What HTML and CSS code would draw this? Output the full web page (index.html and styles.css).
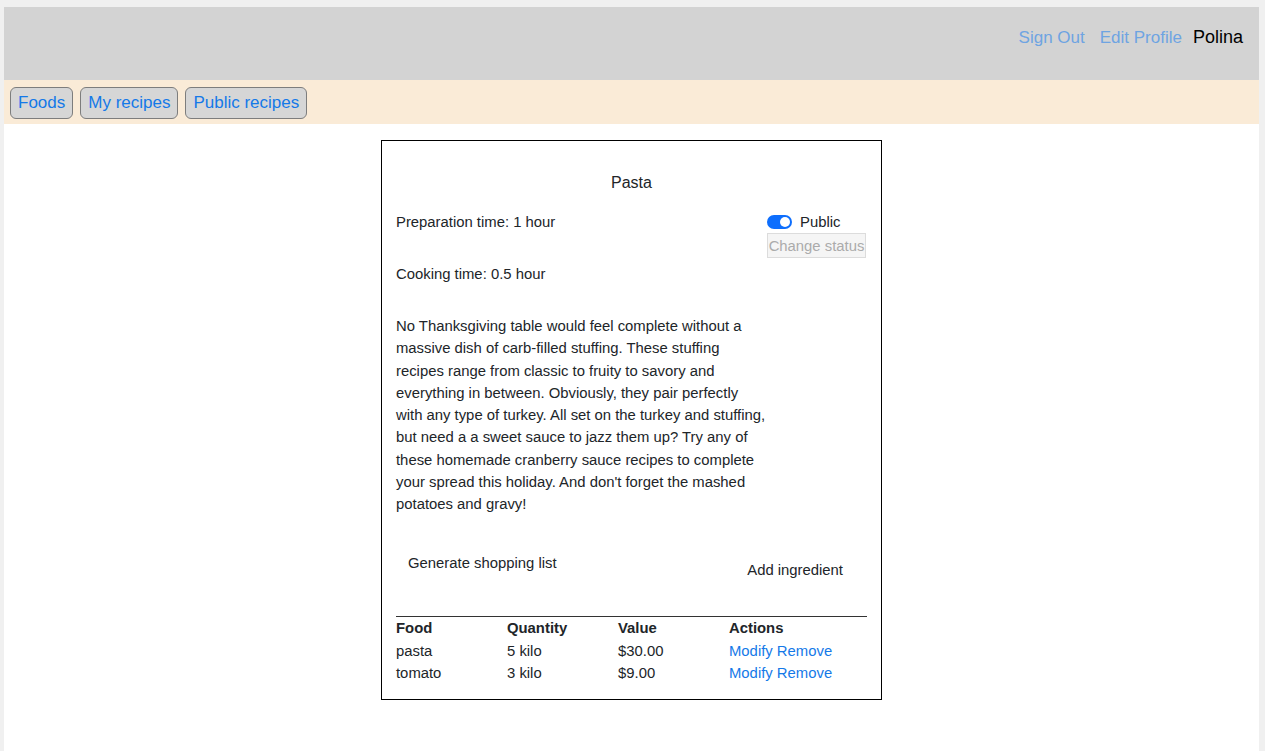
FILE: index.html
```html
<!DOCTYPE html>
<html lang="en">
<head>
<meta charset="utf-8">
<title>Pasta</title>
<link rel="stylesheet" href="styles.css">
</head>
<body>
<div class="page">
  <header class="topbar">
    <a class="toplink" href="#">Sign Out</a>
    <a class="toplink" href="#">Edit Profile</a>
    <span class="user">Polina</span>
  </header>
  <nav class="navbar">
    <button class="navbtn" type="button">Foods</button>
    <button class="navbtn" type="button">My recipes</button>
    <button class="navbtn" type="button">Public recipes</button>
  </nav>
  <main class="main">
    <section class="card">
      <h1 class="title">Pasta</h1>
      <div class="info">
        <div class="details">
          <p class="time">Preparation time: 1 hour</p>
          <p class="time cook">Cooking time: 0.5 hour</p>
          <p class="desc">No Thanksgiving table would feel complete without a massive dish of carb-filled stuffing. These stuffing recipes range from classic to fruity to savory and everything in between. Obviously, they pair perfectly with any type of turkey. All set on the turkey and stuffing, but need a a sweet sauce to jazz them up? Try any of these homemade cranberry sauce recipes to complete your spread this holiday. And don't forget the mashed potatoes and gravy!</p>
        </div>
        <div class="status">
          <div class="switch-row"><span class="switch"><span class="knob"></span></span><span>Public</span></div>
          <button class="status-btn" type="button" disabled>Change status</button>
        </div>
      </div>
      <div class="actions">
        <button class="plain-btn" type="button">Generate shopping list</button>
        <button class="plain-btn add" type="button">Add ingredient</button>
      </div>
      <table class="ingredients">
        <thead>
          <tr><th class="c1">Food</th><th class="c2">Quantity</th><th class="c3">Value</th><th>Actions</th></tr>
        </thead>
        <tbody>
          <tr><td>pasta</td><td>5 kilo</td><td>$30.00</td><td><a class="act" href="#">Modify</a> <a class="act" href="#">Remove</a></td></tr>
          <tr><td>tomato</td><td>3 kilo</td><td>$9.00</td><td><a class="act" href="#">Modify</a> <a class="act" href="#">Remove</a></td></tr>
        </tbody>
      </table>
    </section>
  </main>
</div>
</body>
</html>
```
FILE: styles.css
```css
* { box-sizing: border-box; }
html, body { margin: 0; }
body {
  background: #f0f0f0;
  padding: 7px 6px 0 4px;
  font-family: "Liberation Sans", Arial, sans-serif;
  color: #212529;
}
.page {
  background: #ffffff;
  min-height: 744px;
}
.topbar {
  height: 73px;
  background: #d3d3d3;
  display: flex;
  justify-content: flex-end;
  align-items: baseline;
  padding: 20px 16px 0 0;
}
.toplink {
  font-size: 17px;
  color: #6ea4e2;
  text-decoration: none;
  margin-right: 15px;
}
.toplink + .toplink { margin-right: 11px; }
.user {
  font-size: 18px;
  color: #000;
}
.navbar {
  height: 44px;
  background: #faebd7;
  display: flex;
  align-items: flex-start;
  gap: 7px;
  padding: 7px 6px 0;
}
.navbtn {
  height: 32px;
  padding: 0 7px;
  font-family: "Liberation Sans", Arial, sans-serif;
  font-size: 17px;
  color: #1479e8;
  background: #d6d6d6;
  border: 1px solid #7d7d7d;
  border-radius: 6px;
}
.main {
  display: flex;
  justify-content: center;
  padding-top: 16px;
}
.card {
  width: 501px;
  border: 1px solid #000;
  padding: 15px 14px 14px;
}
.title {
  margin: 15px 0 16px;
  font-size: 16px;
  font-weight: normal;
  line-height: 24px;
  text-align: center;
}
.info {
  display: flex;
  align-items: flex-start;
}
.details {
  width: 371px;
  flex: none;
}
.time {
  margin: 0 0 29px;
  font-size: 14.85px;
  line-height: 22.5px;
}
.time.cook { margin-bottom: 30px; }
.desc {
  margin: 0;
  font-size: 14.85px;
  line-height: 22.3px;
}
.status {
  flex: 1;
  display: flex;
  flex-direction: column;
  align-items: flex-start;
}
.switch-row {
  display: flex;
  align-items: center;
  gap: 8px;
  font-size: 14.85px;
  line-height: 22px;
}
.switch {
  width: 25px;
  height: 14px;
  border-radius: 7px;
  background: #0d6efd;
  display: flex;
  justify-content: flex-end;
  align-items: center;
  padding: 2px;
}
.knob {
  width: 10px;
  height: 10px;
  border-radius: 50%;
  background: #fff;
}
.status-btn {
  width: 99px;
  height: 25px;
  padding: 0;
  font-family: "Liberation Sans", Arial, sans-serif;
  font-size: 14.85px;
  color: #ababab;
  background: #f5f5f5;
  border: 1px solid #dcdcdc;
  white-space: nowrap;
}
.actions {
  display: flex;
  justify-content: space-between;
  align-items: flex-start;
  margin-top: 30px;
}
.plain-btn {
  background: transparent;
  border: none;
  padding: 6px 12px;
  font-family: "Liberation Sans", Arial, sans-serif;
  font-size: 14.85px;
  line-height: 22.5px;
  color: #212529;
}
.plain-btn.add {
  margin-top: 7px;
  margin-right: 12px;
}
.ingredients {
  width: 100%;
  margin-top: 29px;
  border-collapse: collapse;
  border-top: 1px solid #333;
  font-size: 14.85px;
  line-height: 22.5px;
}
.ingredients th, .ingredients td {
  padding: 0;
  text-align: left;
}
.ingredients th { font-weight: bold; }
.c1, .c2, .c3 { width: 111px; }
.act {
  color: #1479e8;
  text-decoration: none;
}
```
